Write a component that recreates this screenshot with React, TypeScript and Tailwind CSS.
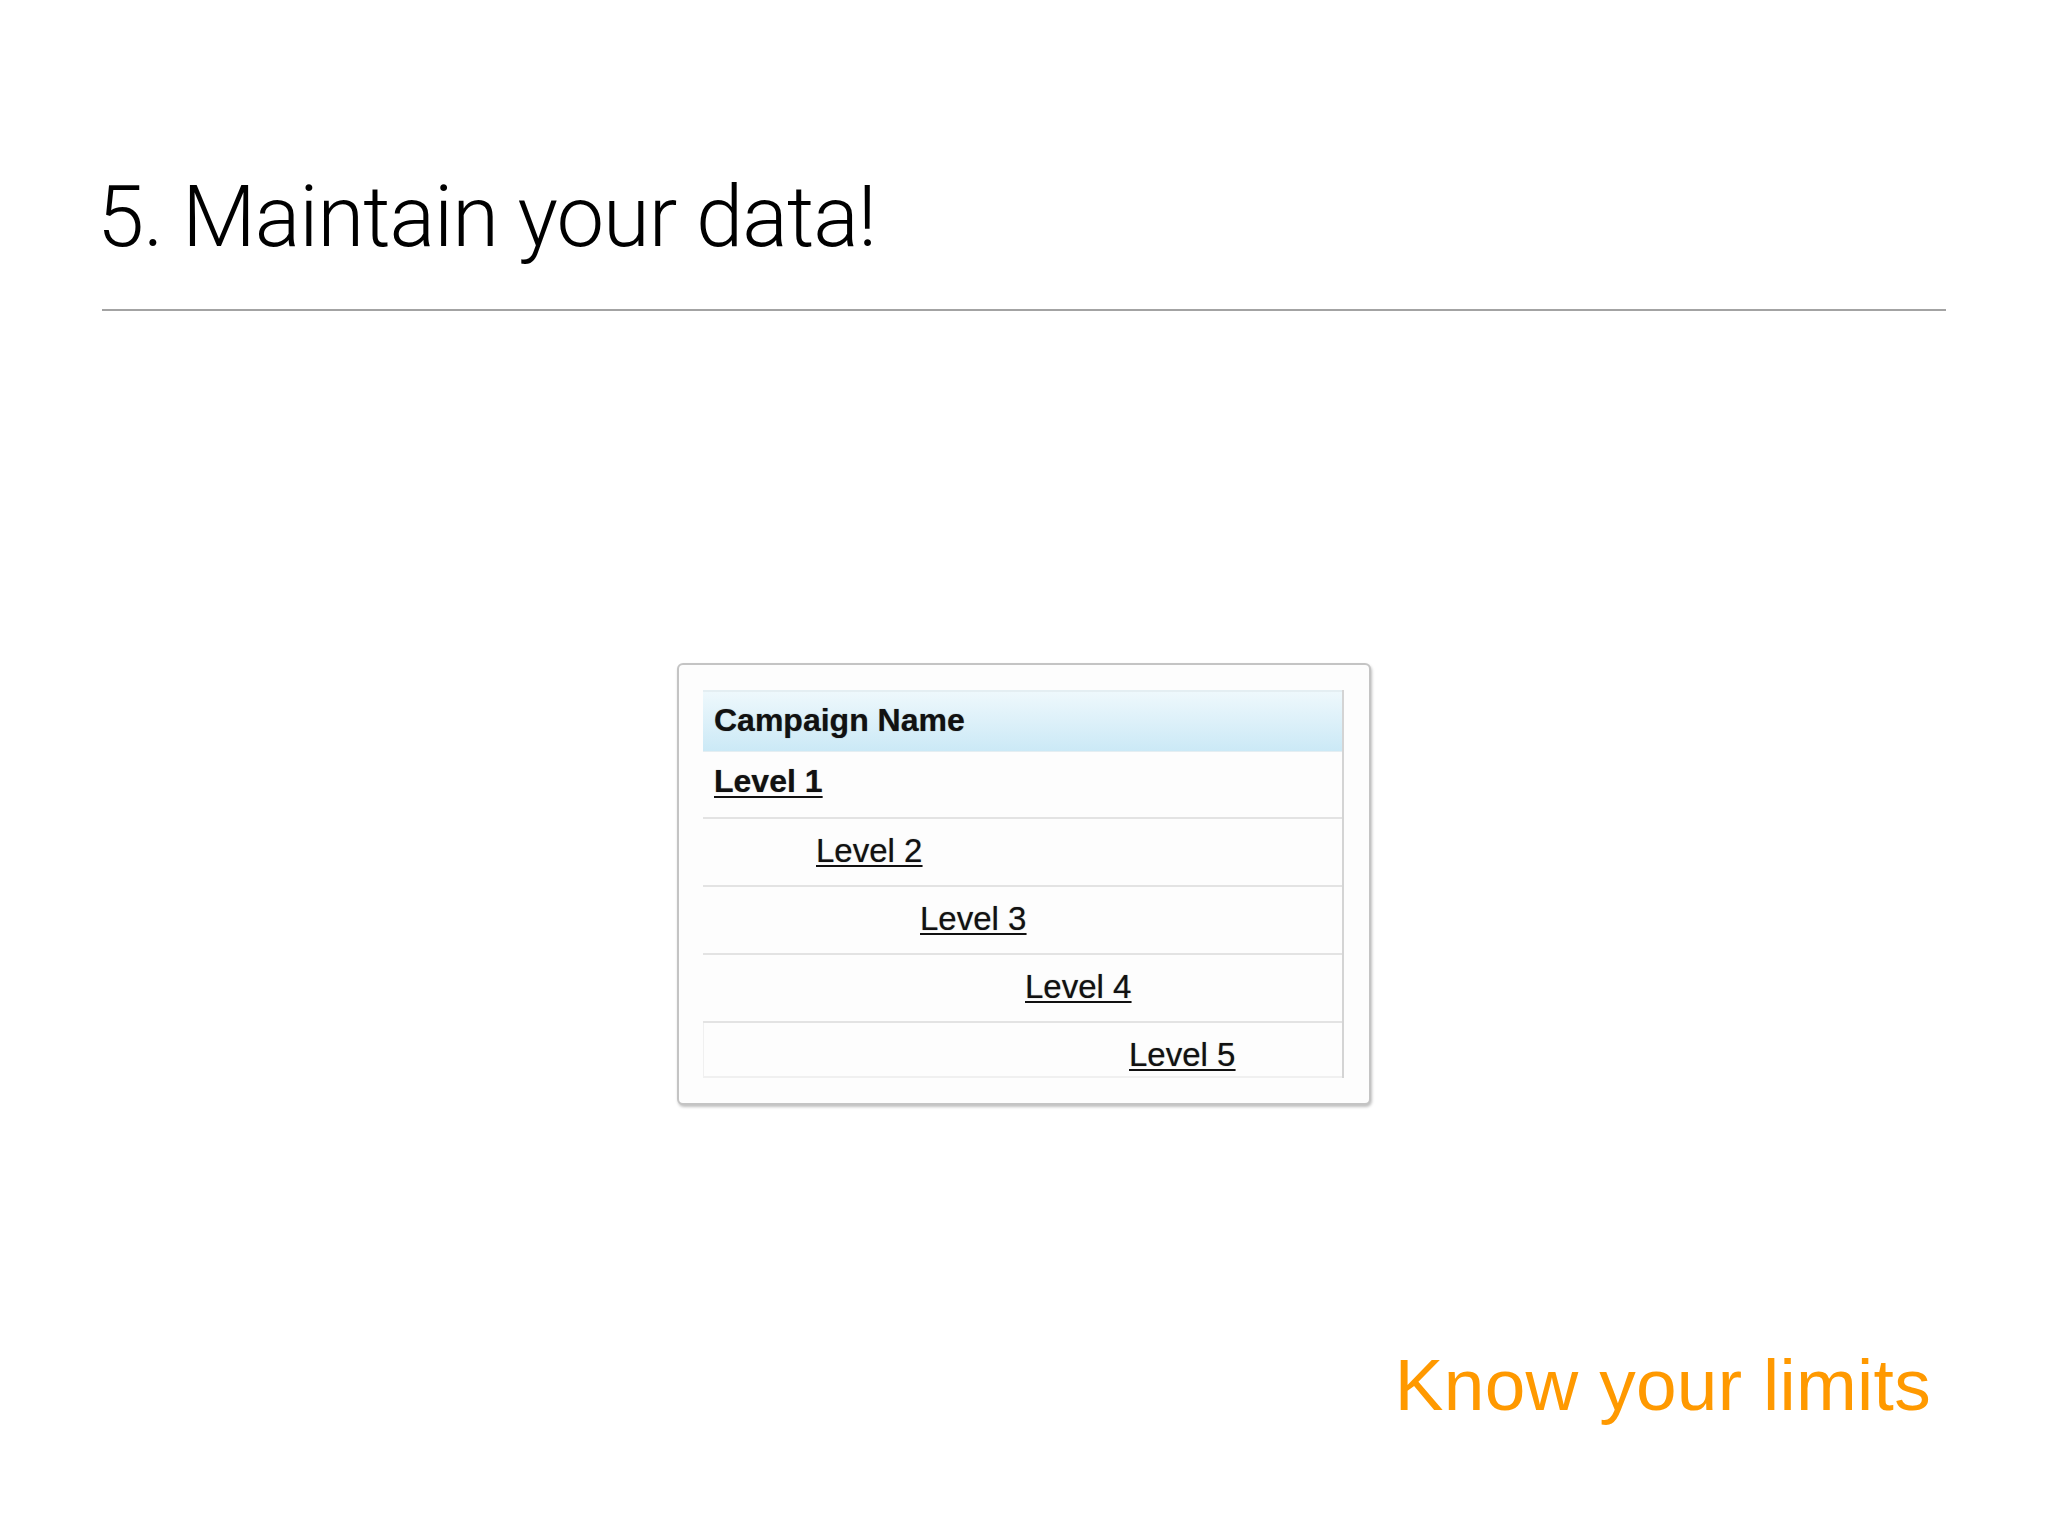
import React from 'react';

const levels = [
  { label: 'Level 2', indent: 'pl-[113px]' },
  { label: 'Level 3', indent: 'pl-[217px]' },
  { label: 'Level 4', indent: 'pl-[322px]' },
];

const App: React.FC = () => {
  return (
    <div className="w-[2048px] h-[1536px] bg-white flex flex-col font-['Liberation_Sans',Arial,sans-serif] text-[#111]">
      {/* Slide title */}
      <h1 className="mt-[175px] ml-[97px] text-[85px] leading-none font-light font-['Roboto',sans-serif] tracking-[-1px] text-black">
        5. Maintain your data!
      </h1>
      <div className="mt-[49px] ml-[102px] w-[1844px] h-[2px] bg-[#a3a3a3]" />

      {/* Screenshot of the campaign table */}
      <div className="mt-[352px] self-center w-[694px] h-[442px] rounded-[6px] border-2 border-[#c4c4c4] bg-[#fdfdfd] shadow-[1px_2px_3px_rgba(0,0,0,0.25)] pt-[25px] pl-[24px] pr-[25px]">
        <div className="h-[388px] overflow-hidden border-r-2 border-[#d4d4d4] flex flex-col">
          <div className="h-[62px] shrink-0 border-t-2 border-[#c8cdd2] bg-gradient-to-b from-[#eef8fc] to-[#cbe9f6] border-b border-[#e4eef2] pl-[11px] pt-[12px]">
            <span className="text-[32px] leading-none font-bold text-[#111] [text-shadow:0_0_1px_rgba(0,0,0,0.5)]">Campaign Name</span>
          </div>
          <div className="h-[67px] shrink-0 border-b-2 border-[#e3e3e3] pl-[11px] pt-[13px]">
            <span className="text-[32px] leading-none font-bold underline decoration-2 underline-offset-[4px] [text-shadow:0_0_1px_rgba(0,0,0,0.5)]">Level 1</span>
          </div>
          {levels.map((l) => (
            <div key={l.label} className={`h-[68px] shrink-0 border-b-2 border-[#e3e3e3] pt-[15px] ${l.indent}`}>
              <span className="text-[33px] leading-none underline decoration-2 underline-offset-[3px] [text-shadow:0_0_1px_rgba(0,0,0,0.5)]">{l.label}</span>
            </div>
          ))}
          <div className="h-[55px] shrink-0 border-l border-b-2 border-[#f0f0f0] pt-[15px] pl-[425px]">
            <span className="text-[33px] leading-none underline decoration-2 underline-offset-[3px] [text-shadow:0_0_1px_rgba(0,0,0,0.5)]">Level 5</span>
          </div>
        </div>
      </div>

      {/* Footer tagline */}
      <p className="mt-[243px] pr-[117px] text-right text-[73px] leading-none tracking-[0.3px] text-[#ff9900]">Know your limits</p>
    </div>
  );
};

export default App;
